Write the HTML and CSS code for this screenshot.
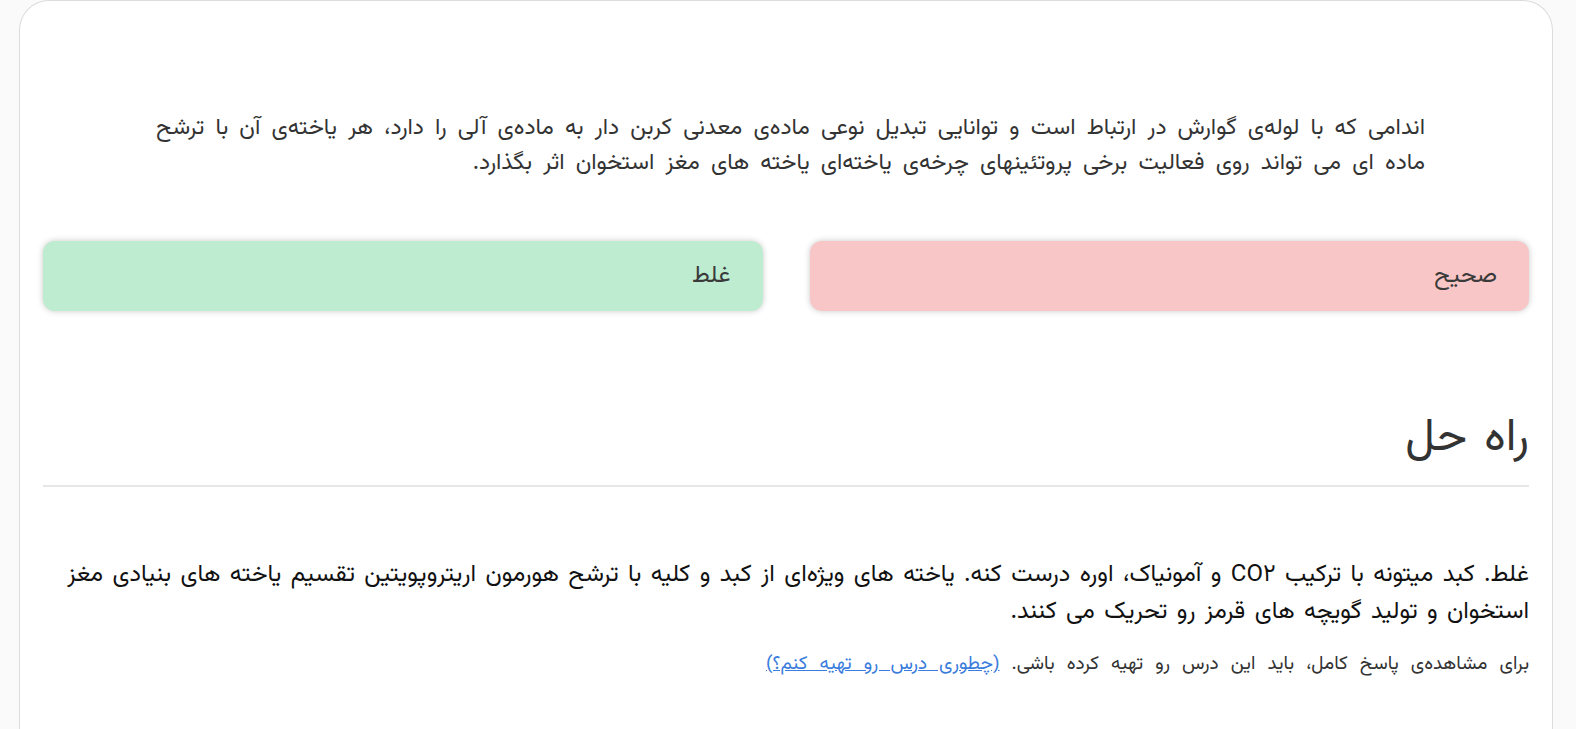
FILE: index.html
```html
<!DOCTYPE html>
<html lang="fa" dir="rtl">
<head>
<meta charset="utf-8">
<title>سوال</title>
<link rel="stylesheet" href="styles.css">
</head>
<body>
<div class="card">
  <div class="question">
    <p class="q-text">اندامی که با لوله‌ی گوارش در ارتباط است و توانایی تبدیل نوعی ماده‌ی معدنی کربن دار به ماده‌ی آلی را دارد، هر یاخته‌ی آن با ترشح ماده ای می تواند روی فعالیت برخی پروتئینهای چرخه‌ی یاخته‌ای یاخته های مغز استخوان اثر بگذارد.</p>
    <div class="options">
      <div class="option option-wrong">صحیح</div>
      <div class="option option-right">غلط</div>
    </div>
  </div>
  <div class="solution">
    <h2 class="sol-title">راه حل</h2>
    <p class="sol-text">غلط. کبد میتونه با ترکیب CO۲ و آمونیاک، اوره درست کنه. یاخته های ویژه‌ای از کبد و کلیه با ترشح هورمون اریتروپویتین تقسیم یاخته های بنیادی مغز استخوان و تولید گویچه های قرمز رو تحریک می کنند.</p>
    <p class="sol-note">برای مشاهده‌ی پاسخ کامل، باید این درس رو تهیه کرده باشی. <a href="#" class="note-link">(چطوری درس رو تهیه کنم؟)</a></p>
  </div>
</div>
</body>
</html>
```
FILE: styles.css
```css
html, body {
  margin: 0;
  padding: 0;
  background: #fafafa;
  overflow: hidden;
}
body {
  font-family: "Vazirmatn", "Noto Sans Arabic", "DejaVu Sans", sans-serif;
  color: #333;
  word-spacing: 5px;
}
.card {
  margin: 0 23px 0 19px;
  background: #fff;
  border: 1px solid #dcdcdc;
  border-bottom: none;
  border-radius: 30px 30px 0 0;
  min-height: 760px;
  padding: 0 23px;
  box-sizing: border-box;
}
.question {
  padding-top: 110px;
}
.q-text {
  margin: 0 104px 0 98px;
  font-size: 23px;
  line-height: 35px;
  color: #333;
}
.options {
  display: flex;
  gap: 47px;
  margin-top: 60px;
}
.option {
  flex: 1;
  height: 70px;
  border-radius: 12px;
  box-shadow: 0 0 6px rgba(0, 0, 0, 0.22);
  display: flex;
  align-items: center;
  padding: 0 32px;
  font-size: 24px;
  color: #3a3a3a;
}
.option-wrong {
  background: #f8c6c6;
}
.option-right {
  background: #bdecd0;
}
.solution {
  padding-top: 100px;
}
.sol-title {
  margin: 0;
  font-size: 46px;
  font-weight: normal;
  line-height: 56px;
  color: #333;
  padding-bottom: 18px;
  border-bottom: 2px solid #e6e6e6;
}
.sol-text {
  margin: 70px 0 0 0;
  font-size: 24px;
  line-height: 37px;
  color: #111;
  word-spacing: 3px;
}
.sol-note {
  margin: 20px 0 0 0;
  font-size: 19px;
  line-height: 28px;
  color: #333;
  word-spacing: 7px;
}
.note-link {
  color: #3b7ddd;
  text-decoration: underline;
}
```
